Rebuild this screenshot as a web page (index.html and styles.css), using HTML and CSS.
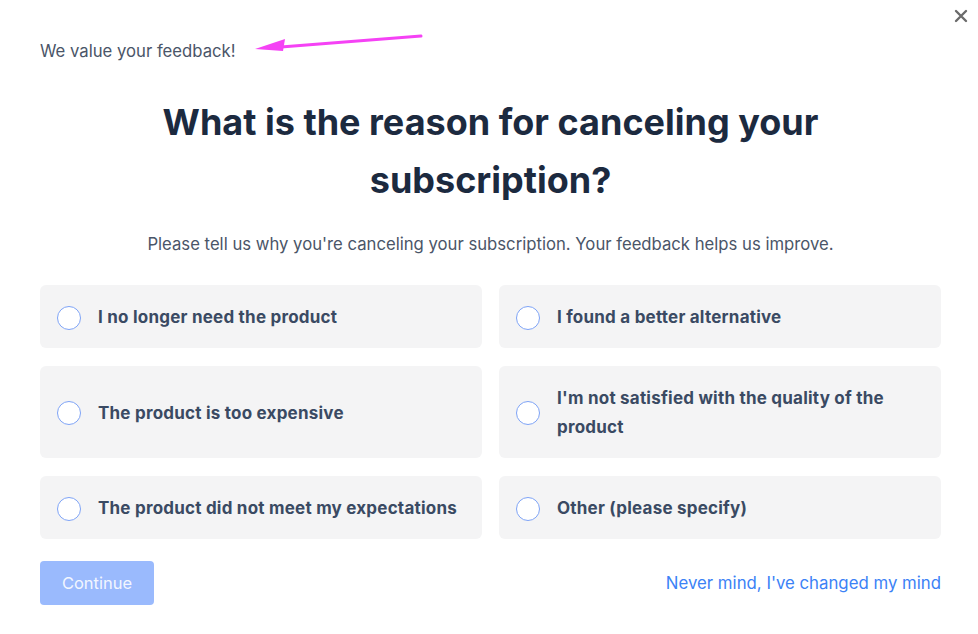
FILE: index.html
```html
<!DOCTYPE html>
<html lang="en">
<head>
<meta charset="utf-8">
<title>Cancel subscription</title>
<link rel="stylesheet" href="styles.css">
</head>
<body>
<div class="modal">
  <button class="close" aria-label="Close">
    <svg width="14" height="14" viewBox="0 0 14 14"><path d="M2 2L12 12M12 2L2 12" stroke="#6b6b6b" stroke-width="2.4" stroke-linecap="round"/></svg>
  </button>
  <div class="top">
    <p class="kicker">We value your feedback!</p>
    <svg class="arrow" width="180" height="30" viewBox="0 0 180 30">
      <path d="M168 6 L28 17" stroke="#f542f5" stroke-width="3" stroke-linecap="round"/>
      <path d="M2 19 L32 9 L30 21 Z" fill="#f542f5"/>
    </svg>
  </div>
  <h1 class="title">What is the reason for canceling your subscription?</h1>
  <p class="subtitle">Please tell us why you're canceling your subscription. Your feedback helps us improve.</p>
  <div class="options">
    <label class="option"><span class="radio"></span><span class="label">I no longer need the product</span></label>
    <label class="option"><span class="radio"></span><span class="label">I found a better alternative</span></label>
    <label class="option"><span class="radio"></span><span class="label">The product is too expensive</span></label>
    <label class="option"><span class="radio"></span><span class="label">I'm not satisfied with the quality of the product</span></label>
    <label class="option"><span class="radio"></span><span class="label">The product did not meet my expectations</span></label>
    <label class="option"><span class="radio"></span><span class="label">Other (please specify)</span></label>
  </div>
  <div class="actions">
    <button class="continue">Continue</button>
    <a class="nevermind" href="#">Never mind, I've changed my mind</a>
  </div>
</div>
</body>
</html>
```
FILE: styles.css
```css
* { box-sizing: border-box; }
html, body { margin: 0; padding: 0; background: #fff; }
body { font-family: Inter, "Noto Sans", "Liberation Sans", sans-serif; }
.modal {
  position: relative;
  width: 978px;
  height: 634px;
  padding: 38px 37px 0 40px;
}
.close {
  position: absolute;
  top: 9px;
  right: 10px;
  width: 14px;
  height: 14px;
  padding: 0;
  border: 0;
  background: none;
  display: flex;
}
.top {
  position: relative;
  height: 26px;
}
.kicker {
  margin: 0;
  font-size: 16.7px;
  line-height: 26px;
  color: #4a5568;
}
.arrow {
  position: absolute;
  left: 213px;
  top: -8px;
}
.title {
  margin: 29px auto 0;
  width: 700px;
  text-align: center;
  font-size: 36px;
  line-height: 58px;
  font-weight: 700;
  color: #1c2a3f;
}
.subtitle {
  margin: 22px 0 0;
  text-align: center;
  font-size: 16.7px;
  line-height: 26px;
  color: #4a5568;
}
.options {
  margin-top: 28px;
  display: grid;
  grid-template-columns: 1fr 1fr;
  column-gap: 17px;
  row-gap: 18px;
}
.option {
  display: flex;
  align-items: center;
  gap: 17px;
  padding: 18px 16px 16px 17px;
  background: #f4f4f5;
  border-radius: 6px;
}
.radio {
  flex: none;
  width: 24px;
  height: 24px;
  border-radius: 50%;
  border: 1px solid #7ea3f6;
  background: #fff;
}
.label {
  font-size: 17px;
  font-weight: 700;
  line-height: 29px;
  letter-spacing: 0.22px;
  color: #3a4a63;
}
.actions {
  margin-top: 22px;
  display: flex;
  justify-content: space-between;
  align-items: center;
}
.continue {
  width: 114px;
  height: 44px;
  border: 0;
  border-radius: 4px;
  background: #9abafd;
  color: #f2f6ff;
  font-family: inherit;
  font-size: 16.5px;
}
.nevermind {
  font-size: 16.8px;
  color: #3b82f6;
  text-decoration: none;
}
```
